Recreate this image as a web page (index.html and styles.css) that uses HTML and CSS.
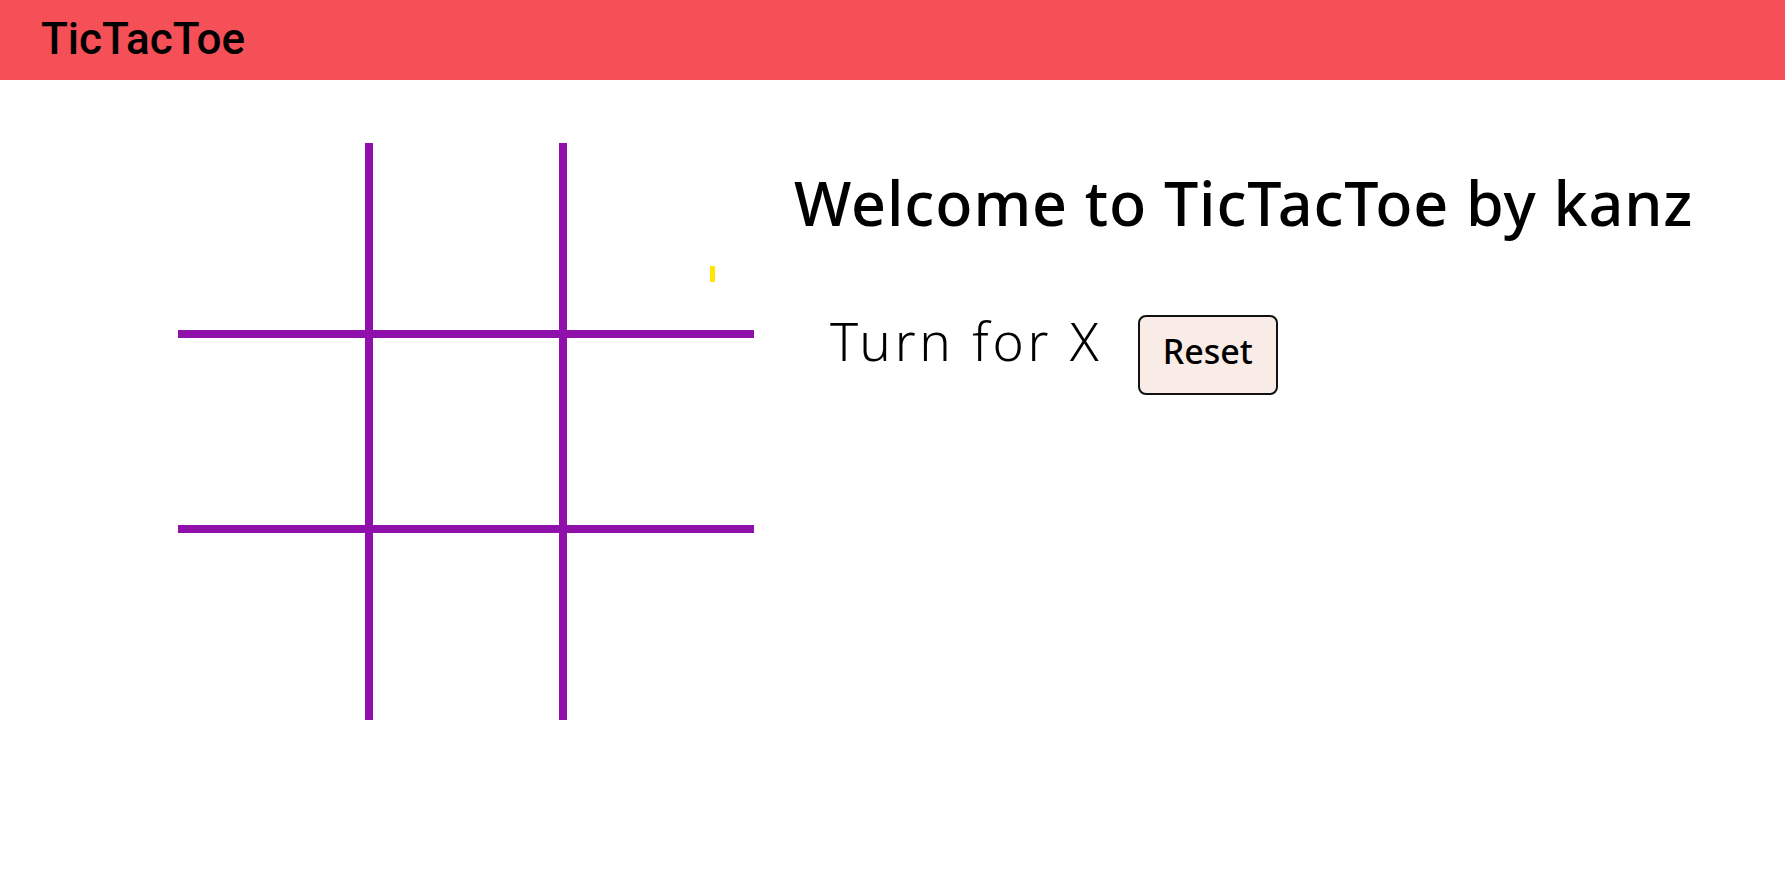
FILE: index.html
```html
<!DOCTYPE html>
<html lang="en">
<head>
<meta charset="utf-8">
<title>TicTacToe</title>
<link rel="stylesheet" href="styles.css">
</head>
<body>
<nav class="navbar"><span class="brand">TicTacToe</span></nav>
<main class="game">
  <div class="board-wrap">
    <div class="board">
      <div class="cell"></div><div class="cell"></div><div class="cell"></div>
      <div class="cell"></div><div class="cell"></div><div class="cell"></div>
      <div class="cell"></div><div class="cell"></div><div class="cell"></div>
    </div>
    <span class="spark"></span>
  </div>
  <div class="info">
    <h1 class="title">Welcome to TicTacToe by kanz</h1>
    <div class="turn-row">
      <span class="turn">Turn for X</span>
      <button class="reset">Reset</button>
    </div>
  </div>
</main>
</body>
</html>
```
FILE: styles.css
```css
* { box-sizing: border-box; }
html, body { margin: 0; padding: 0; background: #ffffff; }
body { font-family: "Noto Sans", sans-serif; color: #000; }

.navbar {
  height: 80px;
  background: #f54f57;
  display: flex;
  align-items: center;
  padding-left: 41px;
}
.brand {
  font-family: Roboto, sans-serif;
  font-size: 44px;
  font-weight: 500;
  line-height: 1;
  color: #000;
  margin-top: -3px;
}

.game {
  display: flex;
  padding: 63px 0 0 178px;
}
.board-wrap { position: relative; }
.board {
  width: 576px;
  height: 577px;
  display: grid;
  grid-template-columns: repeat(3, 1fr);
  grid-template-rows: repeat(3, 1fr);
  gap: 8px;
  background: #8f10aa;
}
.cell { background: #ffffff; }
.spark {
  position: absolute;
  left: 532px;
  top: 123px;
  width: 5px;
  height: 16px;
  background: #ffe600;
}

.info {
  margin-left: 40px;
  padding-top: 29px;
}
.title {
  margin: 0;
  font-size: 61px;
  font-weight: 500;
  letter-spacing: 0.9px;
  line-height: 1;
  white-space: nowrap;
}
.turn-row {
  display: flex;
  align-items: flex-start;
  margin-top: 81px;
  padding-left: 36px;
}
.turn {
  font-size: 53px;
  font-weight: 300;
  letter-spacing: 3.8px;
  line-height: 1;
}
.reset {
  margin: 1px 0 0 35px;
  width: 140px;
  height: 80px;
  border: 2px solid #111;
  border-radius: 8px;
  background: #f9ebe6;
  font-family: "Noto Sans", sans-serif;
  font-size: 34px;
  font-weight: 500;
  color: #000;
  padding: 0 0 8px 0;
}
```
